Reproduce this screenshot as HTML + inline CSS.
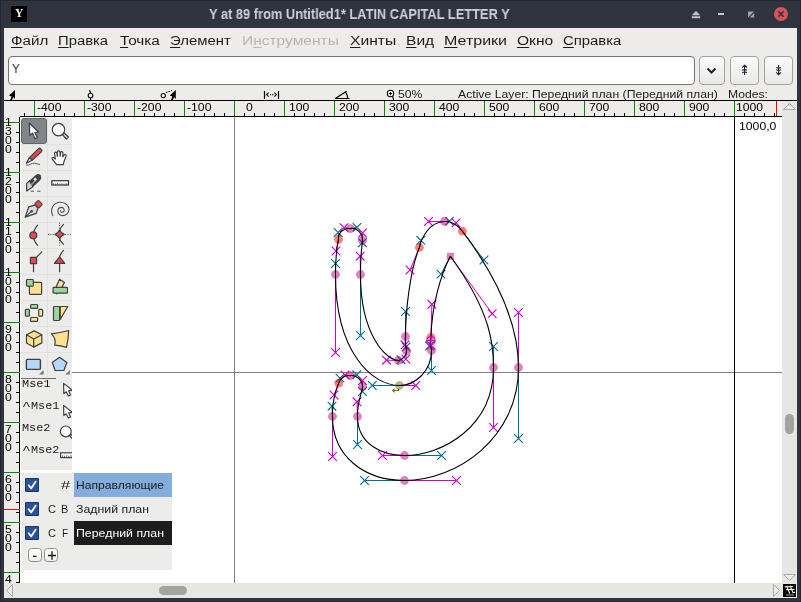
<!DOCTYPE html>
<html><head><meta charset="utf-8"><title>Y at 89 from Untitled1* LATIN CAPITAL LETTER Y</title>
<style>
html,body{margin:0;padding:0;}
body{width:801px;height:602px;overflow:hidden;background:#2f343f;position:relative;font-family:"Liberation Sans",sans-serif;}
.a{position:absolute;}
.t{position:absolute;white-space:pre;line-height:1em;transform-origin:0 0;display:block;will-change:transform;}
.t u{text-decoration:underline;text-decoration-thickness:1px;text-underline-offset:2px;}
svg{position:absolute;left:0;top:0;overflow:visible;}
.btn{position:absolute;box-sizing:border-box;border:1px solid #a2a2a0;border-radius:4px;background:linear-gradient(#fbfbfb,#e8e8e7);}
</style></head><body>
<div class="a" style="left:0;top:0;width:801px;height:602px;background:#2f343f;box-sizing:border-box;border:1px solid #23262f"></div>
<div class="a" style="left:4px;top:28px;width:793px;height:570px;background:#edecea"></div>
<div class="a" style="left:11px;top:6px;width:16px;height:16px;background:#000"></div>
<span class="t" style="left:14.9px;top:8.3px;font-size:11.5px;color:#f4f4f4;font-family:'Liberation Serif',serif;font-weight:bold;">Y</span>
<span class="t" style="left:208.71px;top:7.45px;font-size:14px;color:#cdd0d8;font-weight:bold;transform:scaleX(0.9174);">Y at 89 from Untitled1* LATIN CAPITAL LETTER Y</span>
<svg width="801" height="30" viewBox="0 0 801 30">
<path d="M696 11 L700.2 15.2 L691.8 15.2 Z" fill="#c3c7d1"/><rect x="691.8" y="16.3" width="8.4" height="1.9" fill="#c3c7d1"/>
<rect x="718" y="13" width="6" height="2" fill="#c3c7d1"/>
<path d="M748 11.5 L754 11.5 L748 17.5 Z M754.2 13 L754.2 17.6 L749.6 17.6 Z" fill="#9da1ab"/>
<circle cx="781" cy="14" r="7" fill="#d8545d"/>
<path d="M778.3 11.3 L783.7 16.7 M783.7 11.3 L778.3 16.7" stroke="#2f343f" stroke-width="1.6" fill="none"/>
</svg>
<span class="t" style="left:10.53px;top:33.70px;font-size:13.7px;color:#1c1c1c;transform:scaleX(1.1078);"><u>Ф</u>айл</span>
<span class="t" style="left:58.21px;top:33.70px;font-size:13.7px;color:#1c1c1c;transform:scaleX(1.0838);"><u>П</u>равка</span>
<span class="t" style="left:119.69px;top:33.70px;font-size:13.7px;color:#1c1c1c;transform:scaleX(1.1182);"><u>Т</u>очка</span>
<span class="t" style="left:170.45px;top:33.70px;font-size:13.7px;color:#1c1c1c;transform:scaleX(1.0878);"><u>Э</u>лемент</span>
<span class="t" style="left:242.16px;top:33.70px;font-size:13.7px;color:#b6b6b4;transform:scaleX(1.1343);">И<u>н</u>струменты</span>
<span class="t" style="left:349.65px;top:33.70px;font-size:13.7px;color:#1c1c1c;transform:scaleX(1.1424);"><u>Х</u>инты</span>
<span class="t" style="left:406.05px;top:33.70px;font-size:13.7px;color:#1c1c1c;transform:scaleX(1.1380);"><u>В</u>ид</span>
<span class="t" style="left:444.02px;top:33.70px;font-size:13.7px;color:#1c1c1c;transform:scaleX(1.1698);"><u>М</u>етрики</span>
<span class="t" style="left:517.30px;top:33.70px;font-size:13.7px;color:#1c1c1c;transform:scaleX(1.1353);"><u>О</u>кно</span>
<span class="t" style="left:563.26px;top:33.70px;font-size:13.7px;color:#1c1c1c;transform:scaleX(1.0850);"><u>С</u>правка</span>
<div class="a" style="left:8px;top:56px;width:687px;height:29px;box-sizing:border-box;border:1px solid #737371;border-radius:4px;background:#fff"></div>
<span class="t" style="left:12.07px;top:62.70px;font-size:12.4px;color:#1c1c1c;transform:scaleX(0.9290);">Y</span>
<div class="btn" style="left:699px;top:56px;width:26px;height:29px"></div>
<div class="btn" style="left:730px;top:56px;width:29px;height:29px"></div>
<div class="btn" style="left:764px;top:56px;width:29px;height:29px"></div>
<svg width="801" height="100" viewBox="0 0 801 100">
<path d="M707.5 68.5 L711.5 72.5 L715.5 68.5" stroke="#1f2430" stroke-width="2" fill="none"/>
<g stroke="#1f2430" fill="none" stroke-width="1.15">
<path d="M744.6 65 L744.6 75 M742.2 67.6 L744.6 65.2 L747 67.6 M742.2 70.2 Q744.6 69 747 70.2 M742.2 72.6 Q744.6 71.4 747 72.6"/>
<path d="M778.6 65 L778.6 75 M776.2 72.4 L778.6 74.8 L781 72.4 M776.2 67.4 Q778.6 68.6 781 67.4 M776.2 69.8 Q778.6 71 781 69.8"/>
</g>
</svg>
<svg width="801" height="120" viewBox="0 0 801 120">
<path d="M15 90 L15 99 L13.3 97.2 L12 100 L10.2 100 L11.6 96.4 L9 95.6 Z" fill="#000"/>
<g stroke="#000" fill="none" stroke-width="1.1">
<circle cx="90.5" cy="95.5" r="2.3" fill="#fff"/><path d="M90.5 98 L90.5 100 M90.5 93.2 L90.3 91.6 L89.2 90.3"/>
<circle cx="163.3" cy="95.6" r="2.1" fill="#fff"/><path d="M166 92.6 L172 90.4" stroke-dasharray="1.5 1.2"/>
<path d="M264.5 91 L264.5 99 M278.5 91 L278.5 99" stroke-width="1.2"/>
<path d="M268.6 92.6 L266.6 94.6 L268.6 96.6 M274.4 92.6 L276.4 94.6 L274.4 96.6" />
<path d="M270 94.6 h1.1 M272.2 94.6 h1.1" stroke-width="1.2"/>
<path d="M335.3 98.5 L349.6 98.5 M335.3 98.5 L346.6 91.3 M345.6 92 Q347.6 95 347.8 98.5" stroke-width="1.2"/>
<circle cx="390.5" cy="93.5" r="3.2" fill="#fff"/><path d="M388.8 93.5 L392.2 93.5 M390.5 91.8 L390.5 95.2 M392.6 96.2 L393.6 99.8"/>
</g>
<path d="M175.8 90 L175.8 99 L174.1 97.2 L172.8 100 L171 100 L172.4 96.4 L169.8 95.6 Z" fill="#000"/>
</svg>
<span class="t" style="left:398.01px;top:89.04px;font-size:10.7px;color:#1c1c1c;transform:scaleX(1.1394);">50%</span>
<span class="t" style="left:458.20px;top:89.04px;font-size:10.7px;color:#1c1c1c;transform:scaleX(1.1435);">Active Layer: Передний план (Передний план)</span>
<span class="t" style="left:727.63px;top:89.04px;font-size:10.7px;color:#1c1c1c;transform:scaleX(1.1389);">Modes:</span>
<div class="a" style="left:4px;top:100px;width:793px;height:1px;background:#000"></div>
<div class="a" style="left:20px;top:116px;width:762px;height:1px;background:#000"></div>
<div class="a" style="left:19px;top:117px;width:1px;height:466px;background:#000"></div>
<div class="a" style="left:20px;top:117px;width:762px;height:466px;background:#fff"></div>
<div class="a" style="left:782px;top:101px;width:15px;height:483px;background:#e6e7e3"></div>
<div class="a" style="left:4px;top:583px;width:779px;height:15px;background:#e6e7e3"></div>
<div class="a" style="left:785px;top:414px;width:9px;height:20px;border-radius:4.5px;background:#a3a4a0"></div>
<div class="a" style="left:159px;top:586px;width:28px;height:9px;border-radius:4.5px;background:#a3a4a0"></div>
<div class="a" style="left:783px;top:584px;width:13px;height:13px;background:#060504"></div>
<svg width="801" height="602" viewBox="0 0 801 602"><g fill="#ececea" stroke="#a9aaa6" stroke-width="1"><path d="M789.5 103.5 L795.5 109.5 L783.5 109.5 Z"/><path d="M789.5 580.5 L795.5 574.5 L783.5 574.5 Z"/><path d="M6.5 590.5 L12.5 584.5 L12.5 596.5 Z"/><path d="M779.5 590.5 L773.5 584.5 L773.5 596.5 Z"/></g><g stroke="#fff" stroke-width="1.1" fill="none"><path d="M784.5 587 L793 586.5 M786.5 585.8 L789.8 593.6 M790 585.8 L793 592.6 L795.2 592.2 M786 589.8 L794.5 589.4"/></g><path d="M786 595 L794 595" stroke="#8a785c" stroke-width="1.4"/><path d="M24.5 113 V116 M44.5 113 V116 M54.5 113 V116 M64.5 113 V116 M74.5 113 V116 M94.5 113 V116 M104.5 113 V116 M114.5 113 V116 M124.5 113 V116 M144.5 113 V116 M154.5 113 V116 M164.5 113 V116 M174.5 113 V116 M194.5 113 V116 M204.5 113 V116 M214.5 113 V116 M224.5 113 V116 M244.5 113 V116 M254.5 113 V116 M264.5 113 V116 M274.5 113 V116 M294.5 113 V116 M304.5 113 V116 M314.5 113 V116 M324.5 113 V116 M344.5 113 V116 M354.5 113 V116 M364.5 113 V116 M374.5 113 V116 M394.5 113 V116 M404.5 113 V116 M414.5 113 V116 M424.5 113 V116 M444.5 113 V116 M454.5 113 V116 M464.5 113 V116 M474.5 113 V116 M494.5 113 V116 M504.5 113 V116 M514.5 113 V116 M524.5 113 V116 M544.5 113 V116 M554.5 113 V116 M564.5 113 V116 M574.5 113 V116 M594.5 113 V116 M604.5 113 V116 M614.5 113 V116 M624.5 113 V116 M644.5 113 V116 M654.5 113 V116 M664.5 113 V116 M674.5 113 V116 M694.5 113 V116 M704.5 113 V116 M714.5 113 V116 M724.5 113 V116 M744.5 113 V116 M754.5 113 V116 M764.5 113 V116 M774.5 113 V116" stroke="#000" stroke-width="1" fill="none"/><path d="M34.5 101 V116 M84.5 101 V116 M134.5 101 V116 M184.5 101 V116 M234.5 101 V116 M284.5 101 V116 M334.5 101 V116 M384.5 101 V116 M434.5 101 V116 M484.5 101 V116 M534.5 101 V116 M584.5 101 V116 M634.5 101 V116 M684.5 101 V116 M734.5 101 V116" stroke="#008800" stroke-width="1" fill="none"/><path d="M776.5 101 V116" stroke="#ff0000" stroke-width="1"/><path d="M16 132.5 H19 M16 142.5 H19 M16 152.5 H19 M16 162.5 H19 M16 182.5 H19 M16 192.5 H19 M16 202.5 H19 M16 212.5 H19 M16 232.5 H19 M16 242.5 H19 M16 252.5 H19 M16 262.5 H19 M16 282.5 H19 M16 292.5 H19 M16 302.5 H19 M16 312.5 H19 M16 332.5 H19 M16 342.5 H19 M16 352.5 H19 M16 362.5 H19 M16 382.5 H19 M16 392.5 H19 M16 402.5 H19 M16 412.5 H19 M16 432.5 H19 M16 442.5 H19 M16 452.5 H19 M16 462.5 H19 M16 482.5 H19 M16 492.5 H19 M16 502.5 H19 M16 512.5 H19 M16 532.5 H19 M16 542.5 H19 M16 552.5 H19 M16 562.5 H19 M16 582.5 H19" stroke="#000" stroke-width="1" fill="none"/><path d="M4 122.5 H20 M4 172.5 H20 M4 222.5 H20 M4 272.5 H20 M4 322.5 H20 M4 372.5 H20 M4 422.5 H20 M4 472.5 H20 M4 522.5 H20 M4 572.5 H20" stroke="#008800" stroke-width="1" fill="none"/><path d="M4 509.5 H20" stroke="#ff0000" stroke-width="1"/></svg>
<span class="t" style="left:37.18px;top:101.77px;font-size:10.9px;color:#000;transform:scaleX(1.1200);">-400</span>
<span class="t" style="left:87.18px;top:101.77px;font-size:10.9px;color:#000;transform:scaleX(1.1200);">-300</span>
<span class="t" style="left:137.18px;top:101.77px;font-size:10.9px;color:#000;transform:scaleX(1.1200);">-200</span>
<span class="t" style="left:187.18px;top:101.77px;font-size:10.9px;color:#000;transform:scaleX(1.1200);">-100</span>
<span class="t" style="left:246.01px;top:101.77px;font-size:10.9px;color:#000;transform:scaleX(1.1200);">0</span>
<span class="t" style="left:289.22px;top:101.77px;font-size:10.9px;color:#000;transform:scaleX(1.1200);">100</span>
<span class="t" style="left:339.22px;top:101.77px;font-size:10.9px;color:#000;transform:scaleX(1.1200);">200</span>
<span class="t" style="left:389.22px;top:101.77px;font-size:10.9px;color:#000;transform:scaleX(1.1200);">300</span>
<span class="t" style="left:439.22px;top:101.77px;font-size:10.9px;color:#000;transform:scaleX(1.1200);">400</span>
<span class="t" style="left:489.22px;top:101.77px;font-size:10.9px;color:#000;transform:scaleX(1.1200);">500</span>
<span class="t" style="left:539.22px;top:101.77px;font-size:10.9px;color:#000;transform:scaleX(1.1200);">600</span>
<span class="t" style="left:589.22px;top:101.77px;font-size:10.9px;color:#000;transform:scaleX(1.1200);">700</span>
<span class="t" style="left:639.22px;top:101.77px;font-size:10.9px;color:#000;transform:scaleX(1.1200);">800</span>
<span class="t" style="left:689.22px;top:101.77px;font-size:10.9px;color:#000;transform:scaleX(1.1200);">900</span>
<span class="t" style="left:735.82px;top:101.77px;font-size:10.9px;color:#000;transform:scaleX(1.1200);">1000</span>
<div class="a" style="left:4px;top:117px;width:15px;height:466px;overflow:hidden">
<span class="t" style="left:1.30px;top:-0.03px;font-size:10.9px;color:#000;transform:scaleX(1.1200);">1</span>
<span class="t" style="left:1.30px;top:8.97px;font-size:10.9px;color:#000;transform:scaleX(1.1200);">3</span>
<span class="t" style="left:1.30px;top:17.97px;font-size:10.9px;color:#000;transform:scaleX(1.1200);">0</span>
<span class="t" style="left:1.30px;top:26.97px;font-size:10.9px;color:#000;transform:scaleX(1.1200);">0</span>
<span class="t" style="left:1.30px;top:49.97px;font-size:10.9px;color:#000;transform:scaleX(1.1200);">1</span>
<span class="t" style="left:1.30px;top:58.97px;font-size:10.9px;color:#000;transform:scaleX(1.1200);">2</span>
<span class="t" style="left:1.30px;top:67.97px;font-size:10.9px;color:#000;transform:scaleX(1.1200);">0</span>
<span class="t" style="left:1.30px;top:76.97px;font-size:10.9px;color:#000;transform:scaleX(1.1200);">0</span>
<span class="t" style="left:1.30px;top:99.97px;font-size:10.9px;color:#000;transform:scaleX(1.1200);">1</span>
<span class="t" style="left:1.30px;top:108.97px;font-size:10.9px;color:#000;transform:scaleX(1.1200);">1</span>
<span class="t" style="left:1.30px;top:117.97px;font-size:10.9px;color:#000;transform:scaleX(1.1200);">0</span>
<span class="t" style="left:1.30px;top:126.97px;font-size:10.9px;color:#000;transform:scaleX(1.1200);">0</span>
<span class="t" style="left:1.30px;top:149.97px;font-size:10.9px;color:#000;transform:scaleX(1.1200);">1</span>
<span class="t" style="left:1.30px;top:158.97px;font-size:10.9px;color:#000;transform:scaleX(1.1200);">0</span>
<span class="t" style="left:1.30px;top:167.97px;font-size:10.9px;color:#000;transform:scaleX(1.1200);">0</span>
<span class="t" style="left:1.30px;top:176.97px;font-size:10.9px;color:#000;transform:scaleX(1.1200);">0</span>
<span class="t" style="left:1.30px;top:206.97px;font-size:10.9px;color:#000;transform:scaleX(1.1200);">9</span>
<span class="t" style="left:1.30px;top:215.97px;font-size:10.9px;color:#000;transform:scaleX(1.1200);">0</span>
<span class="t" style="left:1.30px;top:224.97px;font-size:10.9px;color:#000;transform:scaleX(1.1200);">0</span>
<span class="t" style="left:1.30px;top:256.97px;font-size:10.9px;color:#000;transform:scaleX(1.1200);">8</span>
<span class="t" style="left:1.30px;top:265.97px;font-size:10.9px;color:#000;transform:scaleX(1.1200);">0</span>
<span class="t" style="left:1.30px;top:274.97px;font-size:10.9px;color:#000;transform:scaleX(1.1200);">0</span>
<span class="t" style="left:1.30px;top:306.97px;font-size:10.9px;color:#000;transform:scaleX(1.1200);">7</span>
<span class="t" style="left:1.30px;top:315.97px;font-size:10.9px;color:#000;transform:scaleX(1.1200);">0</span>
<span class="t" style="left:1.30px;top:324.97px;font-size:10.9px;color:#000;transform:scaleX(1.1200);">0</span>
<span class="t" style="left:1.30px;top:356.97px;font-size:10.9px;color:#000;transform:scaleX(1.1200);">6</span>
<span class="t" style="left:1.30px;top:365.97px;font-size:10.9px;color:#000;transform:scaleX(1.1200);">0</span>
<span class="t" style="left:1.30px;top:374.97px;font-size:10.9px;color:#000;transform:scaleX(1.1200);">0</span>
<span class="t" style="left:1.30px;top:406.97px;font-size:10.9px;color:#000;transform:scaleX(1.1200);">5</span>
<span class="t" style="left:1.30px;top:415.97px;font-size:10.9px;color:#000;transform:scaleX(1.1200);">0</span>
<span class="t" style="left:1.30px;top:424.97px;font-size:10.9px;color:#000;transform:scaleX(1.1200);">0</span>
<span class="t" style="left:1.30px;top:456.97px;font-size:10.9px;color:#000;transform:scaleX(1.1200);">4</span>
<span class="t" style="left:1.30px;top:465.97px;font-size:10.9px;color:#000;transform:scaleX(1.1200);">0</span>
<span class="t" style="left:1.30px;top:474.97px;font-size:10.9px;color:#000;transform:scaleX(1.1200);">0</span>
<span class="t" style="left:1.30px;top:506.97px;font-size:10.9px;color:#000;transform:scaleX(1.1200);">3</span>
<span class="t" style="left:1.30px;top:515.97px;font-size:10.9px;color:#000;transform:scaleX(1.1200);">0</span>
<span class="t" style="left:1.30px;top:524.97px;font-size:10.9px;color:#000;transform:scaleX(1.1200);">0</span>
</div>
<svg width="801" height="602" viewBox="0 0 801 602"><defs><clipPath id="cv"><rect x="21" y="117" width="761" height="466"/></clipPath></defs><g clip-path="url(#cv)"><path d="M234.5 117 V583" stroke="#808080" stroke-width="1"/><path d="M21 372.5 H782" stroke="#808080" stroke-width="1"/><path d="M734.5 117 V583" stroke="#000" stroke-width="1"/><path d="M335.50 274.50 L335.50 263.50 M399.50 385.50 L372.30 385.50 M431.50 350.50 L431.50 370.50 M430.90 337.40 L429.40 346.00 M450.40 256.30 L441.00 274.10 M493.50 367.50 L493.50 346.50 M404.50 455.50 L441.50 455.50 M357.50 416.50 L357.50 444.50 M362.50 386.50 L362.50 391.50 M350.30 375.60 L356.80 374.80 M338.70 383.10 L340.00 378.10 M332.50 416.50 L332.00 406.20 M404.50 480.50 L364.50 480.50 M518.50 367.50 L518.50 438.50 M462.40 231.20 L484.00 260.00 M444.50 221.50 L449.50 221.20 M419.40 247.50 L420.80 240.30 M405.50 336.50 L405.50 311.50 M406.60 350.80 L406.00 347.00 M398.50 360.50 L401.00 359.70 M360.50 274.50 L360.50 335.50 M362.50 240.50 L362.40 242.70 M350.30 228.60 L357.00 227.40 M338.50 239.30 L338.10 232.50" stroke="#007090" stroke-width="1" fill="none"/><path d="M335.50 274.50 L335.50 352.50 M399.50 385.50 L415.80 385.50 M431.50 350.50 L431.00 345.20 M430.90 337.40 L431.90 304.30 M450.40 256.30 L492.20 313.60 M493.50 367.50 L493.50 427.50 M404.50 455.50 L382.50 455.50 M357.50 416.50 L357.00 401.80 M362.50 386.50 L362.50 380.50 M350.30 375.60 L345.00 374.90 M338.70 383.10 L334.00 395.00 M332.50 416.50 L332.50 456.50 M404.50 480.50 L456.50 480.50 M518.50 367.50 L518.50 312.50 M462.40 231.20 L456.00 222.90 M444.50 221.50 L428.50 221.50 M419.40 247.50 L410.00 270.00 M405.50 336.50 L405.00 344.80 M406.60 350.80 L405.80 359.00 M398.50 360.50 L386.50 360.20 M360.50 274.50 L360.20 256.20 M362.50 240.50 L362.50 233.00 M350.30 228.60 L344.00 227.60 M338.50 239.30 L336.00 251.00" stroke="#cc00cc" stroke-width="1" fill="none"/><path d="M331.20 259.20 L339.80 267.80 M331.20 267.80 L339.80 259.20 M368.00 381.20 L376.60 389.80 M368.00 389.80 L376.60 381.20 M427.20 366.20 L435.80 374.80 M427.20 374.80 L435.80 366.20 M425.10 341.70 L433.70 350.30 M425.10 350.30 L433.70 341.70 M436.70 269.80 L445.30 278.40 M436.70 278.40 L445.30 269.80 M489.20 342.20 L497.80 350.80 M489.20 350.80 L497.80 342.20 M437.20 451.20 L445.80 459.80 M437.20 459.80 L445.80 451.20 M353.20 440.20 L361.80 448.80 M353.20 448.80 L361.80 440.20 M358.20 387.20 L366.80 395.80 M358.20 395.80 L366.80 387.20 M352.50 370.50 L361.10 379.10 M352.50 379.10 L361.10 370.50 M335.70 373.80 L344.30 382.40 M335.70 382.40 L344.30 373.80 M327.70 401.90 L336.30 410.50 M327.70 410.50 L336.30 401.90 M360.20 476.20 L368.80 484.80 M360.20 484.80 L368.80 476.20 M514.20 434.20 L522.80 442.80 M514.20 442.80 L522.80 434.20 M479.70 255.70 L488.30 264.30 M479.70 264.30 L488.30 255.70 M445.20 216.90 L453.80 225.50 M445.20 225.50 L453.80 216.90 M416.50 236.00 L425.10 244.60 M416.50 244.60 L425.10 236.00 M401.20 307.20 L409.80 315.80 M401.20 315.80 L409.80 307.20 M401.70 342.70 L410.30 351.30 M401.70 351.30 L410.30 342.70 M396.70 355.40 L405.30 364.00 M396.70 364.00 L405.30 355.40 M356.20 331.20 L364.80 339.80 M356.20 339.80 L364.80 331.20 M358.10 238.40 L366.70 247.00 M358.10 247.00 L366.70 238.40 M352.70 223.10 L361.30 231.70 M352.70 231.70 L361.30 223.10 M333.80 228.20 L342.40 236.80 M333.80 236.80 L342.40 228.20" stroke="#007090" stroke-width="1.15" fill="none"/><path d="M331.20 348.20 L339.80 356.80 M331.20 356.80 L339.80 348.20 M411.50 381.20 L420.10 389.80 M411.50 389.80 L420.10 381.20 M426.70 340.90 L435.30 349.50 M426.70 349.50 L435.30 340.90 M427.60 300.00 L436.20 308.60 M427.60 308.60 L436.20 300.00 M487.90 309.30 L496.50 317.90 M487.90 317.90 L496.50 309.30 M489.20 423.20 L497.80 431.80 M489.20 431.80 L497.80 423.20 M378.20 451.20 L386.80 459.80 M378.20 459.80 L386.80 451.20 M352.70 397.50 L361.30 406.10 M352.70 406.10 L361.30 397.50 M358.20 376.20 L366.80 384.80 M358.20 384.80 L366.80 376.20 M340.70 370.60 L349.30 379.20 M340.70 379.20 L349.30 370.60 M329.70 390.70 L338.30 399.30 M329.70 399.30 L338.30 390.70 M328.20 452.20 L336.80 460.80 M328.20 460.80 L336.80 452.20 M452.20 476.20 L460.80 484.80 M452.20 484.80 L460.80 476.20 M514.20 308.20 L522.80 316.80 M514.20 316.80 L522.80 308.20 M451.70 218.60 L460.30 227.20 M451.70 227.20 L460.30 218.60 M424.20 217.20 L432.80 225.80 M424.20 225.80 L432.80 217.20 M405.70 265.70 L414.30 274.30 M405.70 274.30 L414.30 265.70 M400.70 340.50 L409.30 349.10 M400.70 349.10 L409.30 340.50 M401.50 354.70 L410.10 363.30 M401.50 363.30 L410.10 354.70 M382.20 355.90 L390.80 364.50 M382.20 364.50 L390.80 355.90 M355.90 251.90 L364.50 260.50 M355.90 260.50 L364.50 251.90 M358.20 228.70 L366.80 237.30 M358.20 237.30 L366.80 228.70 M339.70 223.30 L348.30 231.90 M339.70 231.90 L348.30 223.30 M331.70 246.70 L340.30 255.30 M331.70 255.30 L340.30 246.70" stroke="#cc00cc" stroke-width="1.15" fill="none"/><circle cx="335.50" cy="274.50" r="4.4" fill="#c00080" fill-opacity="0.5"/><circle cx="399.50" cy="385.50" r="4.4" fill="#707000" fill-opacity="0.5"/><circle cx="431.50" cy="350.50" r="4.4" fill="#c00080" fill-opacity="0.5"/><circle cx="430.90" cy="337.40" r="4.4" fill="#ff0000" fill-opacity="0.5"/><rect x="446.90" y="252.80" width="7" height="7" fill="#c00080" fill-opacity="0.5"/><circle cx="493.50" cy="367.50" r="4.4" fill="#c00080" fill-opacity="0.5"/><circle cx="404.50" cy="455.50" r="4.4" fill="#c00080" fill-opacity="0.5"/><circle cx="357.50" cy="416.50" r="4.4" fill="#c00080" fill-opacity="0.5"/><circle cx="362.50" cy="386.50" r="4.4" fill="#c00080" fill-opacity="0.5"/><circle cx="350.30" cy="375.60" r="4.4" fill="#c00080" fill-opacity="0.5"/><circle cx="338.70" cy="383.10" r="4.4" fill="#ff0000" fill-opacity="0.5"/><circle cx="332.50" cy="416.50" r="4.4" fill="#c00080" fill-opacity="0.5"/><circle cx="404.50" cy="480.50" r="4.4" fill="#c00080" fill-opacity="0.5"/><circle cx="518.50" cy="367.50" r="4.4" fill="#c00080" fill-opacity="0.5"/><circle cx="462.40" cy="231.20" r="4.4" fill="#ff0000" fill-opacity="0.5"/><circle cx="444.50" cy="221.50" r="4.4" fill="#c00080" fill-opacity="0.5"/><circle cx="419.40" cy="247.50" r="4.4" fill="#ff0000" fill-opacity="0.5"/><circle cx="405.50" cy="336.50" r="4.4" fill="#c00080" fill-opacity="0.5"/><circle cx="406.60" cy="350.80" r="4.4" fill="#c00080" fill-opacity="0.5"/><circle cx="398.50" cy="360.50" r="4.4" fill="#c00080" fill-opacity="0.5"/><circle cx="360.50" cy="274.50" r="4.4" fill="#c00080" fill-opacity="0.5"/><circle cx="362.50" cy="240.50" r="4.4" fill="#c00080" fill-opacity="0.5"/><circle cx="350.30" cy="228.60" r="4.4" fill="#c00080" fill-opacity="0.5"/><circle cx="338.50" cy="239.30" r="4.4" fill="#ff0000" fill-opacity="0.5"/><path d="M335.50 274.50 C335.50 352.50 372.30 385.50 399.50 385.50 C415.80 385.50 431.50 370.50 431.50 350.50 C431.00 345.20 429.40 346.00 430.90 337.40 C431.90 304.30 441.00 274.10 450.40 256.30 C492.20 313.60 493.50 346.50 493.50 367.50 C493.50 427.50 441.50 455.50 404.50 455.50 C382.50 455.50 357.50 444.50 357.50 416.50 C357.00 401.80 362.50 391.50 362.50 386.50 C362.50 380.50 356.80 374.80 350.30 375.60 C345.00 374.90 340.00 378.10 338.70 383.10 C334.00 395.00 332.00 406.20 332.50 416.50 C332.50 456.50 364.50 480.50 404.50 480.50 C456.50 480.50 518.50 438.50 518.50 367.50 C518.50 312.50 484.00 260.00 462.40 231.20 C456.00 222.90 449.50 221.20 444.50 221.50 C428.50 221.50 420.80 240.30 419.40 247.50 C410.00 270.00 405.50 311.50 405.50 336.50 C405.00 344.80 406.00 347.00 406.60 350.80 C405.80 359.00 401.00 359.70 398.50 360.50 C386.50 360.20 360.50 335.50 360.50 274.50 C360.20 256.20 362.40 242.70 362.50 240.50 C362.50 233.00 357.00 227.40 350.30 228.60 C344.00 227.60 338.10 232.50 338.50 239.30 C336.00 251.00 335.50 263.50 335.50 274.50 Z" stroke="#000" stroke-width="1.1" fill="none" stroke-linejoin="round"/><g stroke="#cc00cc" stroke-width="1.1" fill="none"><circle cx="430.9" cy="340.7" r="4.2"/><path d="M426.7 340.7 H435.1 M430.9 336.5 V344.9"/></g><path d="M398.6 388.4 L398.6 390.5 L392.6 390.5 M394.6 388.6 L392.6 390.5 L394.6 392.4" stroke="#707000" stroke-width="1.1" fill="none"/></g></svg>

<span class="t" style="left:739.28px;top:120.97px;font-size:10.9px;color:#000;transform:scaleX(1.1215);">1000,0</span>
<div class="a" style="left:21px;top:118px;width:51px;height:352px;background:#ececeb"></div>
<svg width="801" height="602" viewBox="0 0 801 602"><defs><clipPath id="pl"><rect x="21" y="118" width="51" height="352"/></clipPath></defs><g clip-path="url(#pl)"><path d="M47.5 118 V378 M21 144.5 H72 M21 170.5 H72 M21 196.5 H72 M21 222.5 H72 M21 248.5 H72 M21 274.5 H72 M21 300.5 H72 M21 326.5 H72 M21 352.5 H72" stroke="#e1e1e0" stroke-width="1" fill="none"/><rect x="21.5" y="118.5" width="25" height="25" rx="2.5" fill="#7f8588" stroke="#5f6568" stroke-width="1"/><g transform="translate(21 118)"><path d="M8.4 5.2 L8.8 17.2 L11.5 15.2 L14 20.8 L16.2 19.6 L13.9 14.5 L17.5 14 Z" fill="#fff" stroke="#3c4043" stroke-width="1.2" stroke-linejoin="round" stroke-linecap="round"/></g><g transform="translate(47 118)"><path d="M15.4 16.6 L17.2 15 L21.4 19 L19.4 21 Z" fill="#d5dada" stroke="#3c4043" stroke-width="1.2" stroke-linejoin="round" stroke-linecap="round"/><circle cx="11.5" cy="11.6" r="6.2" fill="#fff" stroke="#3c4043" stroke-width="1.2" stroke-linejoin="round" stroke-linecap="round"/></g><g transform="translate(21 144)"><path d="M8.4 13.6 L11.4 16 L5.3 19.2 Z" fill="#dcdcdc" stroke="#3c4043" stroke-width="1.2" stroke-linejoin="round" stroke-linecap="round"/><path d="M17.6 4.6 Q18.6 3.8 19.6 4.8 L20.6 5.8 Q21.4 6.8 20.6 7.6 L11.4 16 L8.4 13.6 Z" fill="#e8474f" stroke="#3c4043" stroke-width="1.2" stroke-linejoin="round" stroke-linecap="round"/><path d="M5.2 21.2 C9 21.4 10.5 19 13.5 19.2 C16 19.4 17 20.6 19 20.4" fill="none" stroke="#555" stroke-width="1"/></g><g transform="translate(47 144)"><path transform="translate(0 0.8)" d="M9.6 19.8 L5.3 14.4 Q4.6 12.8 6.2 12.7 Q7.2 12.8 8.3 14.3 L7.6 8.8 Q7.7 7.3 8.9 7.4 Q9.9 7.6 10 8.8 L10.3 11.6 L10.4 7.2 Q10.7 5.9 11.9 6.1 Q13 6.3 13 7.5 L13.1 11.4 L13.6 7.8 Q14.1 6.6 15.2 7 Q16.1 7.4 15.9 8.6 L15.7 12 L16.8 10.3 Q17.8 9.3 18.7 10 Q19.4 10.8 18.9 12 L17 16.6 Q16.6 18.6 16.3 19.8 Z" fill="#fff" stroke="#3c4043" stroke-width="1.2" stroke-linejoin="round" stroke-linecap="round"/></g><g transform="translate(21 170)"><path d="M8.6 10.6 L5.6 13.6 L5.6 21 L12 16.8 Z" fill="#cfd3d3" stroke="#3c4043" stroke-width="1.2" stroke-linejoin="round" stroke-linecap="round"/><path d="M7.9 11.2 L15 4.7 Q17.7 3 19.6 5.2 Q21.2 7.8 19.2 10.2 L11.9 17.1 Z" fill="#3c4043"/><path d="M9.4 14.4 L13.4 10.4 L14.6 11.6 L10.6 15.6 Z" fill="#8d9395"/><rect x="-1.3" y="-1.3" width="2.6" height="2.6" transform="translate(14.2 9.3) rotate(-42)" fill="#e6e8e8"/><path d="M9.7 21.2 H13 M16.2 21.2 H19.5" stroke="#555" stroke-width="1" fill="none"/></g><g transform="translate(47 170)"><rect x="4.85" y="10.7" width="16.6" height="4.3" fill="#fff" stroke="#3c4043" stroke-width="1.3"/><path d="M6.30 14.8 V13.1 M8.46 14.8 V13.5 M10.62 14.8 V13.1 M12.78 14.8 V13.5 M14.94 14.8 V13.1 M17.10 14.8 V13.5 M19.26 14.8 V13.1" stroke="#3c4043" stroke-width="0.8" fill="none"/></g><g transform="translate(21 196)"><path d="M14 9.2 L7.8 10.8 L4.2 21.1 L15.2 17.4 L16.9 12.2 Z" fill="#d9dbdb" stroke="#3c4043" stroke-width="1.2" stroke-linejoin="round" stroke-linecap="round"/><path d="M4.4 20.9 L10.4 15.4" stroke="#3c4043" stroke-width="1.2" fill="none"/><circle cx="10.7" cy="15.2" r="1.2" fill="#3c4043"/><rect x="-3" y="-2.8" width="6" height="5.6" rx="1.2" transform="translate(17.5 8.2) rotate(45)" fill="#e8474f" stroke="#3c4043" stroke-width="1"/></g><g transform="translate(47 196)"><path d="M5.8 19.8 C2.5 13 6.5 6.2 13.4 6.2 C19 6.2 22 10.2 22 13.4 C22 17 19 19.6 15.6 19.6 C12.6 19.6 10.8 17.4 10.9 15 C11 13 12.4 11.4 14.4 11.4 C16.2 11.4 17.3 12.8 17.2 14.4 C17.1 15.6 16.2 16.4 15 16.3 C14 16.2 13.5 15.6 13.6 14.8" fill="none" stroke="#4d5154" stroke-width="1.1" stroke-linecap="round"/></g><g transform="translate(21 222)"><path d="M16.6 3.2 Q8 13.3 16.6 23.4" fill="none" stroke="#3c4043" stroke-width="1.2" stroke-linejoin="round" stroke-linecap="round"/><circle cx="12.3" cy="13.3" r="3.5" fill="#e8474f" stroke="#3c4043" stroke-width="1.2" stroke-linejoin="round" stroke-linecap="round"/></g><g transform="translate(47 222)"><path d="M1 12.4 H7.4 M18 12.4 H24.5 M12.6 0.8 V6.5 M12.6 18 V23.6" stroke="#3c4043" stroke-width="1" stroke-dasharray="1 1.4" fill="none"/><path d="M16.5 2.3 Q13.5 5.5 12.6 8.2 M12.6 16.6 Q13.5 19.4 16.5 22.4" fill="none" stroke="#3c4043" stroke-width="1.2" stroke-linejoin="round" stroke-linecap="round"/><path d="M12.6 8 Q14 11 17.2 12.4 Q14 13.8 12.6 16.8 Q11.2 13.8 8 12.4 Q11.2 11 12.6 8 Z" fill="#e8474f" stroke="#3c4043" stroke-width="1.2" stroke-linejoin="round" stroke-linecap="round"/></g><g transform="translate(21 248)"><path d="M15.6 9.2 L20.8 3.9 M12.5 15.6 V23.7" fill="none" stroke="#3c4043" stroke-width="1.2" stroke-linejoin="round" stroke-linecap="round"/><rect x="9.4" y="9.4" width="6.2" height="6.2" fill="#e8474f" stroke="#3c4043" stroke-width="1.2" stroke-linejoin="round" stroke-linecap="round"/></g><g transform="translate(47 248)"><path d="M12.6 8.8 Q14 4.8 16.5 2.3 M12.6 15.3 V23.7" fill="none" stroke="#3c4043" stroke-width="1.2" stroke-linejoin="round" stroke-linecap="round"/><path d="M12.6 8.8 L17.8 15.3 L7.4 15.3 Z" fill="#e8474f" stroke="#3c4043" stroke-width="1.2" stroke-linejoin="round" stroke-linecap="round"/></g><g transform="translate(21 274)"><rect x="8.4" y="8.4" width="12.2" height="11.9" rx="0.8" fill="#ffe08c" stroke="#3c4043" stroke-width="1.2" stroke-linejoin="round" stroke-linecap="round"/><rect x="5.5" y="5.5" width="6.8" height="6.6" rx="0.8" fill="#9fd49c" stroke="#3c4043" stroke-width="1.2" stroke-linejoin="round" stroke-linecap="round"/></g><g transform="translate(47 274)"><path d="M12.6 5.2 L17.5 8.4 L14.2 14.5 L9 13.2 Z" fill="#ffe08c" stroke="#3c4043" stroke-width="1.2" stroke-linejoin="round" stroke-linecap="round"/><path d="M5.6 17.2 L5.8 17.6 M9.6 19.8 L10.2 20.2" stroke="#3c4043" stroke-width="1.2"/><rect x="6.1" y="13.3" width="14.3" height="5.9" rx="0.8" fill="#9fd49c" stroke="#3c4043" stroke-width="1.2" stroke-linejoin="round" stroke-linecap="round"/></g><g transform="translate(21 300)"><rect x="9.6" y="4.5" width="7" height="3.8" rx="0.9" fill="#9fd49c" stroke="#3c4043" stroke-width="1.2" stroke-linejoin="round" stroke-linecap="round"/><rect x="4.4" y="9.4" width="4" height="6.8" rx="0.9" fill="#9fd49c" stroke="#3c4043" stroke-width="1.2" stroke-linejoin="round" stroke-linecap="round"/><rect x="17.7" y="9.4" width="3.9" height="6.8" rx="0.9" fill="#ffe08c" stroke="#3c4043" stroke-width="1.2" stroke-linejoin="round" stroke-linecap="round"/><rect x="9.6" y="17.5" width="7" height="3.8" rx="0.9" fill="#ffe08c" stroke="#3c4043" stroke-width="1.2" stroke-linejoin="round" stroke-linecap="round"/></g><g transform="translate(47 300)"><path d="M13.2 6.5 L20.8 6.5 L13.2 19.4 Z" fill="#ffe08c" stroke="#3c4043" stroke-width="1.2" stroke-linejoin="round" stroke-linecap="round"/><rect x="6.5" y="6.5" width="6.1" height="14" rx="0.8" fill="#9fd49c" stroke="#3c4043" stroke-width="1.2" stroke-linejoin="round" stroke-linecap="round"/></g><g transform="translate(21 326)"><path d="M13.2 4.9 L20.8 8.8 L20.8 16.9 L12.7 21.1 L5.5 16.9 L5.5 8.8 Z" fill="#ffe08c" stroke="#3c4043" stroke-width="1.2" stroke-linejoin="round" stroke-linecap="round"/><path d="M5.5 8.8 L12.7 13 L20.8 8.8 M12.7 13 V21.1" fill="none" stroke="#3c4043" stroke-width="1.2" stroke-linejoin="round" stroke-linecap="round"/></g><g transform="translate(47 326)"><path d="M4.5 7.8 Q13 6.8 21.7 4.5 Q21.4 13 19.5 21.4 Q13 19.6 7.8 19.2 Q9.6 13 4.5 7.8 Z" fill="#ffe08c" stroke="#3c4043" stroke-width="1.2" stroke-linejoin="round" stroke-linecap="round"/></g><g transform="translate(21 352)"><rect x="5.4" y="7.4" width="14" height="10" rx="1" fill="#b5d8f8" stroke="#3c4043" stroke-width="1.4"/><path d="M22.6 18 V22.6 H18 Z" fill="#737a7d"/></g><g transform="translate(47 352)"><path d="M12.6 5.3 L19.8 10.5 L16.9 18.5 L8.2 18.5 L5.3 10.5 Z" fill="#b5d8f8" stroke="#3c4043" stroke-width="1.2" stroke-linejoin="round" stroke-linecap="round"/><path d="M22.9 18 V22.6 H18.3 Z" fill="#737a7d"/></g><path d="M21 378.5 H56" stroke="#707070" stroke-width="1"/><path d="M63.6 383.4 L63.8 393.6 L66.2 391.8 L68.4 396.0 L70.6 395.0 L68.6 390.8 L72.4 390.4 Z" fill="#fff" stroke="#3c4043" stroke-width="1.2" stroke-linejoin="round" stroke-linecap="round"/><path d="M63.6 405.4 L63.8 415.6 L66.2 413.8 L68.4 418.0 L70.6 417.0 L68.6 412.8 L72.4 412.4 Z" fill="#fff" stroke="#3c4043" stroke-width="1.2" stroke-linejoin="round" stroke-linecap="round"/><path d="M69.4 435.6 L70.8 434.2 L76 439 L74.4 440.8 Z" fill="#d5dada" stroke="#3c4043" stroke-width="1.2" stroke-linejoin="round" stroke-linecap="round"/><circle cx="65.8" cy="431.4" r="5.4" fill="#fff" stroke="#3c4043" stroke-width="1.2" stroke-linejoin="round" stroke-linecap="round"/><rect x="60.6" y="452.8" width="17" height="4.8" fill="#fff" stroke="#3c4043" stroke-width="1.2"/><path d="M62.6 457 V455.2 M64.7 457 V455.8 M66.8 457 V455.2 M68.9 457 V455.8 M71.0 457 V455.2 M73.1 457 V455.8" stroke="#3c4043" stroke-width="0.8" fill="none"/></g></svg>
<span class="t" style="left:22.05px;top:379.23px;font-size:11.7px;color:#1c1c1c;font-family:'Liberation Mono', monospace;transform:scaleX(1.0189);">Mse1</span>
<span class="t" style="left:22.35px;top:401.23px;font-size:11.7px;color:#1c1c1c;font-family:'Liberation Mono', monospace;transform:scaleX(1.2548);">^</span>
<span class="t" style="left:31.06px;top:401.23px;font-size:11.7px;color:#1c1c1c;font-family:'Liberation Mono', monospace;transform:scaleX(1.0152);">Mse1</span>
<span class="t" style="left:22.06px;top:423.23px;font-size:11.7px;color:#1c1c1c;font-family:'Liberation Mono', monospace;transform:scaleX(1.0140);">Mse2</span>
<span class="t" style="left:22.35px;top:445.23px;font-size:11.7px;color:#1c1c1c;font-family:'Liberation Mono', monospace;transform:scaleX(1.2548);">^</span>
<span class="t" style="left:31.06px;top:445.23px;font-size:11.7px;color:#1c1c1c;font-family:'Liberation Mono', monospace;transform:scaleX(1.0102);">Mse2</span>

<div class="a" style="left:21px;top:473px;width:151px;height:97px;background:#ececeb"></div>
<div class="a" style="left:74px;top:473px;width:98px;height:24px;background:#82addc"></div>
<div class="a" style="left:74px;top:521px;width:98px;height:24px;background:#1d1d1d"></div>
<svg width="801" height="602" viewBox="0 0 801 602"><defs><linearGradient id="bg1" x1="0" y1="0" x2="0" y2="1"><stop offset="0" stop-color="#ffffff"/><stop offset="1" stop-color="#ececeb"/></linearGradient></defs><rect x="25.5" y="478.5" width="13" height="13" rx="0.3" fill="#2a5298" stroke="#1b3464" stroke-width="1"/><path d="M28.7 485.3 L31.3 488.3 L35.7 481.6" fill="none" stroke="#fff" stroke-width="1.8" stroke-linecap="round" stroke-linejoin="round"/><rect x="25.5" y="502.5" width="13" height="13" rx="0.3" fill="#2a5298" stroke="#1b3464" stroke-width="1"/><path d="M28.7 509.3 L31.3 512.3 L35.7 505.6" fill="none" stroke="#fff" stroke-width="1.8" stroke-linecap="round" stroke-linejoin="round"/><rect x="25.5" y="526.5" width="13" height="13" rx="0.3" fill="#2a5298" stroke="#1b3464" stroke-width="1"/><path d="M28.7 533.3 L31.3 536.3 L35.7 529.6" fill="none" stroke="#fff" stroke-width="1.8" stroke-linecap="round" stroke-linejoin="round"/><rect x="28.5" y="548.5" width="13" height="13" rx="3" fill="url(#bg1)" stroke="#8e8e8c" stroke-width="1"/><rect x="44.5" y="548.5" width="13" height="13" rx="3" fill="url(#bg1)" stroke="#8e8e8c" stroke-width="1"/><path d="M33 556.3 H36.5 M48 555.5 H56 M52 551.3 V559.7" stroke="#1a1a1a" stroke-width="1.3" fill="none"/></svg>
<span class="t" style="left:61.00px;top:480.29px;font-size:11px;color:#1c1c1c;transform:scaleX(1.5038);">#</span>
<span class="t" style="left:48.00px;top:504.29px;font-size:11px;color:#1c1c1c;transform:scaleX(0.9567);">C</span>
<span class="t" style="left:61.40px;top:504.29px;font-size:11px;color:#1c1c1c;transform:scaleX(0.9813);">B</span>
<span class="t" style="left:48.00px;top:528.29px;font-size:11px;color:#1c1c1c;transform:scaleX(0.9567);">C</span>
<span class="t" style="left:61.80px;top:528.29px;font-size:11px;color:#1c1c1c;transform:scaleX(0.9227);">F</span>
<span class="t" style="left:76.00px;top:480.29px;font-size:11px;color:#1c1c1c;transform:scaleX(1.1030);">Направляющие</span>
<span class="t" style="left:76.00px;top:504.29px;font-size:11px;color:#1c1c1c;transform:scaleX(1.1202);">Задний план</span>
<span class="t" style="left:76.00px;top:528.29px;font-size:11px;color:#ffffff;transform:scaleX(1.1221);">Передний план</span>

</body></html>
